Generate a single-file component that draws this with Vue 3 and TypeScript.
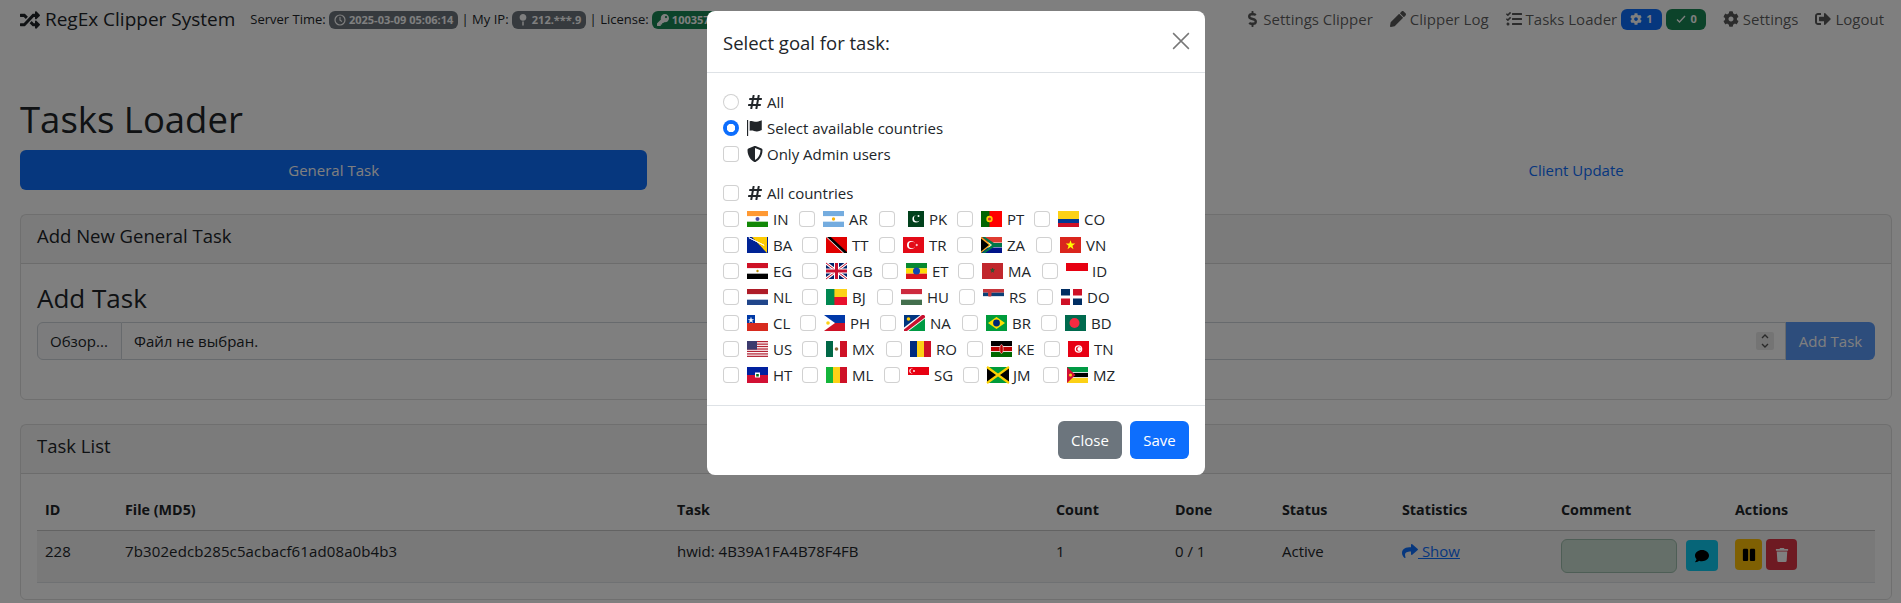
<template>
  <div class="page">
    <nav class="navbar">
      <div class="nav-left">
        <a class="brand">
          <svg class="icon" viewBox="0 0 512 512"><path :d="icons.shuffle" /></svg>
          RegEx Clipper System
        </a>
        <span class="server-info">
          Server Time:
          <span class="badge bg-dark">
            <svg class="icon" viewBox="0 0 24 24"><circle cx="12" cy="12" r="10" fill="none" stroke="currentColor" stroke-width="2.4" /><path d="M12 6v6.5l4 2.5" fill="none" stroke="currentColor" stroke-width="2.2" /></svg>
            2025-03-09 05:06:14</span>
          | My IP:
          <span class="badge bg-dark">
            <svg class="icon" viewBox="0 0 288 512"><path :d="icons.pin" /></svg>
            212.***.9</span>
          | License:
          <span class="badge bg-green">
            <svg class="icon" viewBox="0 0 512 512"><path :d="icons.key" /></svg>
            100357 Days</span>
        </span>
      </div>
      <div class="nav-right">
        <a class="nav-link"><svg class="icon dollar" viewBox="0 0 320 512"><path :d="icons.dollar" /></svg> Settings Clipper</a>
        <a class="nav-link"><svg class="icon" viewBox="0 0 512 512"><path :d="icons.pencil" /></svg> Clipper Log</a>
        <a class="nav-link">
          <svg class="icon" viewBox="0 0 512 512"><path :d="icons.tasks" /></svg> Tasks Loader
          <span class="count-badge bg-blue"><svg class="icon" viewBox="0 0 512 512"><path :d="icons.cog" /></svg> 1</span>
          <span class="count-badge bg-green"><svg class="icon" viewBox="0 0 24 24"><path d="M4 13l5 5L20 6" fill="none" stroke="currentColor" stroke-width="2.6" /></svg> 0</span>
        </a>
        <a class="nav-link"><svg class="icon" viewBox="0 0 512 512"><path :d="icons.cog" /></svg> Settings</a>
        <a class="nav-link"><svg class="icon" viewBox="0 0 512 512"><path :d="icons.logout" /></svg> Logout</a>
      </div>
    </nav>

    <main class="container">
      <h1>Tasks Loader</h1>
      <div class="tabs">
        <a class="tab active">General Task</a>
        <a class="tab">Other Task</a>
        <a class="tab">Client Update</a>
      </div>

      <section class="card add-card">
        <header class="card-header">Add New General Task</header>
        <div class="card-body">
          <h3>Add Task</h3>
          <div class="input-group">
            <span class="file-btn">Обзор...</span>
            <span class="file-name">Файл не выбран.</span>
            <span class="spin">
              <svg viewBox="0 0 10 18"><path d="M2 6l3-3 3 3M2 12l3 3 3-3" fill="none" stroke="currentColor" stroke-width="1.4" /></svg>
            </span>
            <button class="add-btn">Add Task</button>
          </div>
        </div>
      </section>

      <section class="card list-card">
        <header class="card-header">Task List</header>
        <div class="card-body">
          <table class="task-table">
            <colgroup>
              <col v-for="w in colWidths" :key="w" :style="{ width: w + 'px' }" />
            </colgroup>
            <thead>
              <tr>
                <th>ID</th><th>File (MD5)</th><th>Task</th><th>Count</th><th>Done</th>
                <th>Status</th><th>Statistics</th><th>Comment</th><th>Actions</th>
              </tr>
            </thead>
            <tbody>
              <tr>
                <td>228</td>
                <td class="md5">7b302edcb285c5acbacf61ad08a0b4b3</td>
                <td>hwid: 4B39A1FA4B78F4FB</td>
                <td>1</td>
                <td>0 / 1</td>
                <td>Active</td>
                <td><a class="show-link"><svg class="icon" viewBox="0 0 512 512"><path :d="icons.share" /></svg> Show</a></td>
                <td>
                  <div class="comment-cell">
                    <span class="comment-input"></span>
                    <button class="comment-btn"><svg class="icon" viewBox="0 0 512 512"><path :d="icons.comment" /></svg></button>
                  </div>
                </td>
                <td>
                  <div class="action-cell">
                    <button class="pause-btn"><svg class="icon" viewBox="0 0 448 512"><path :d="icons.pause" /></svg></button>
                    <button class="trash-btn"><svg class="icon" viewBox="0 0 448 512"><path :d="icons.trash" /></svg></button>
                  </div>
                </td>
              </tr>
            </tbody>
          </table>
        </div>
      </section>
    </main>

    <div class="backdrop"></div>

    <div class="modal">
      <header class="modal-header">
        <h5>Select goal for task:</h5>
        <svg class="close-x" viewBox="0 0 16 16"><path d="M1 1l14 14M15 1L1 15" fill="none" stroke="currentColor" stroke-width="1.3" /></svg>
      </header>
      <div class="modal-body">
        <label class="check-row">
          <input type="radio" name="goal" />
          <svg class="icon hash" viewBox="0 0 448 512"><path :d="icons.hash" /></svg> All
        </label>
        <label class="check-row">
          <input type="radio" name="goal" checked />
          <svg class="icon" viewBox="0 0 18 18"><path d="M0 0h1.3v18H0zM3 1.5c3-1.5 5 .8 8 .4 2.4-.3 4-1 5.6-1.6v11c-2 1.200-4 1.600-5.800 1.500-3-.2-4.800-1.700-7.800-.6z" /></svg>
          Select available countries
        </label>
        <label class="check-row">
          <input type="checkbox" />
          <svg class="icon" viewBox="0 0 512 512"><path :d="icons.shield" /></svg>
          Only Admin users
        </label>
        <label class="check-row all-countries">
          <input type="checkbox" />
          <svg class="icon hash" viewBox="0 0 448 512"><path :d="icons.hash" /></svg> All countries
        </label>
        <div v-for="(row, i) in countryRows" :key="i" class="country-row">
          <label v-for="c in row" :key="c.code" class="country" :style="{ width: c.pitch + 'px' }">
            <input type="checkbox" />
            <svg class="flag" viewBox="0 0 21 16" v-html="flags[c.code]"></svg>
            <span>{{ c.code }}</span>
          </label>
        </div>
      </div>
      <footer class="modal-footer">
        <button class="btn-close-modal">Close</button>
        <button class="btn-save">Save</button>
      </footer>
    </div>
  </div>
</template>

<script setup lang="ts">
interface Country {
  code: string
  pitch: number
}

const colWidths = [80, 552, 379, 119, 107, 120, 159, 174, 148]

const icons = {
  shuffle:
    'M504.971 359.029c9.373 9.373 9.373 24.569 0 33.941l-80 79.984c-15.01 15.01-40.971 4.49-40.971-16.971V416h-58.785a12.004 12.004 0 0 1-8.773-3.812l-70.556-75.596 53.333-57.143L352 336h32v-39.981c0-21.438 25.943-31.998 40.971-16.971l80 79.981zM12 176h84l52.781 56.551 53.333-57.143-70.556-75.596A11.999 11.999 0 0 0 122.785 96H12c-6.627 0-12 5.373-12 12v56c0 6.627 5.373 12 12 12zm372 0v39.984c0 21.46 25.961 31.98 40.971 16.971l80-79.984c9.373-9.373 9.373-24.569 0-33.941l-80-79.981C409.943 24.021 384 34.582 384 56.019V96h-58.785a12.004 12.004 0 0 0-8.773 3.812L96 336H12c-6.627 0-12 5.373-12 12v56c0 6.627 5.373 12 12 12h110.785c3.326 0 6.503-1.381 8.773-3.812L352 176h32z',
  pin: 'M112 316.94v156.69l22.02 33.02c4.75 7.12 15.22 7.12 19.97 0L176 473.63V316.94c-10.39 1.92-21.06 3.06-32 3.06s-21.61-1.14-32-3.06zM144 0C64.47 0 0 64.47 0 144s64.47 144 144 144 144-64.47 144-144S223.53 0 144 0z',
  key: 'M512 176.001C512 273.203 433.202 352 336 352c-11.22 0-22.19-1.062-32.827-3.069l-24.012 27.014A23.999 23.999 0 0 1 261.223 384H224v40c0 13.255-10.745 24-24 24h-40v40c0 13.255-10.745 24-24 24H24c-13.255 0-24-10.745-24-24v-78.059c0-6.365 2.529-12.47 7.029-16.971l161.802-161.802C163.108 213.814 160 195.271 160 176 160 78.798 238.797.001 335.999 0 433.488-.001 512 78.511 512 176.001zM336 128c0 26.51 21.49 48 48 48s48-21.49 48-48-21.49-48-48-48-48 21.49-48 48z',
  dollar:
    'M209.2 233.4l-108-31.6C88.7 198.2 80 186.5 80 173.5c0-16.3 13.2-29.5 29.5-29.5h66.3c12.2 0 24.2 3.7 34.2 10.5 6.1 4.1 14.3 3.1 19.5-2l34.8-34c7.1-6.9 6.1-18.4-1.8-24.5C238 74.8 207.4 64.1 176 64V16c0-8.8-7.2-16-16-16h-32c-8.8 0-16 7.2-16 16v48h-2.5C45.8 64-5.4 118.7.5 183.6c4.2 46.1 39.4 83.6 83.8 96.6l102.5 30c12.5 3.7 21.2 15.3 21.2 28.3 0 16.3-13.2 29.5-29.5 29.5h-66.3C100 368 88 364.3 78 357.5c-6.1-4.1-14.3-3.1-19.5 2l-34.8 34c-7.1 6.9-6.1 18.4 1.8 24.5 24.5 19.2 55.1 29.9 86.5 30v48c0 8.8 7.2 16 16 16h32c8.8 0 16-7.2 16-16v-48.2c46.6-.9 90.3-28.6 105.7-72.7 21.5-61.6-14.6-124.8-72.5-141.7z',
  pencil:
    'M497.9 142.1l-46.1 46.1c-4.7 4.7-12.3 4.7-17 0l-111-111c-4.7-4.7-4.7-12.3 0-17l46.1-46.1c18.7-18.7 49.1-18.7 67.9 0l60.1 60.1c18.8 18.7 18.8 49.1 0 67.9zM284.2 99.8L21.6 362.4.4 483.9c-2.9 16.4 11.4 30.6 27.8 27.8l121.5-21.3 262.6-262.6c4.7-4.7 4.7-12.3 0-17l-111-111c-4.8-4.7-12.4-4.7-17.1 0z',
  tasks:
    'M139.61 35.5a12 12 0 0 0-17 0L58.93 98.81l-22.7-22.12a12 12 0 0 0-17 0L3.53 92.41a12 12 0 0 0 0 17l47.59 47.4a12.78 12.78 0 0 0 17.61 0l15.59-15.62L156.52 69a12.09 12.09 0 0 0 .09-17zm0 159.19a12 12 0 0 0-17 0l-63.68 63.72-22.7-22.1a12 12 0 0 0-17 0L3.53 252a12 12 0 0 0 0 17L51 316.5a12.77 12.77 0 0 0 17.6 0l15.7-15.69 72.2-72.22a12 12 0 0 0 .09-16.9zM64 368c-26.49 0-48.59 21.5-48.59 48S37.53 464 64 464a48 48 0 0 0 0-96zm432 16H208a16 16 0 0 0-16 16v32a16 16 0 0 0 16 16h288a16 16 0 0 0 16-16v-32a16 16 0 0 0-16-16zm0-320H208a16 16 0 0 0-16 16v32a16 16 0 0 0 16 16h288a16 16 0 0 0 16-16V80a16 16 0 0 0-16-16zm0 160H208a16 16 0 0 0-16 16v32a16 16 0 0 0 16 16h288a16 16 0 0 0 16-16v-32a16 16 0 0 0-16-16z',
  cog: 'M487.4 315.7l-42.6-24.6c4.3-23.2 4.3-47 0-70.2l42.6-24.6c4.9-2.8 7.1-8.6 5.5-14-11.1-35.6-30-67.8-54.7-94.6-3.8-4.1-10-5.1-14.8-2.3L380.8 110c-17.9-15.4-38.5-27.3-60.8-35.1V25.8c0-5.6-3.9-10.5-9.4-11.7-36.7-8.2-74.3-7.8-109.2 0-5.5 1.2-9.4 6.1-9.4 11.7V75c-22.2 7.9-42.8 19.8-60.8 35.1L88.7 85.5c-4.9-2.8-11-1.9-14.8 2.3-24.7 26.7-43.6 58.9-54.7 94.6-1.7 5.4.6 11.2 5.5 14L67.3 221c-4.3 23.2-4.3 47 0 70.2l-42.6 24.6c-4.9 2.8-7.1 8.6-5.5 14 11.1 35.6 30 67.8 54.7 94.6 3.8 4.1 10 5.1 14.8 2.3l42.6-24.6c17.9 15.4 38.5 27.3 60.8 35.1v49.2c0 5.6 3.9 10.5 9.4 11.7 36.7 8.2 74.3 7.8 109.2 0 5.5-1.2 9.4-6.1 9.4-11.7v-49.2c22.2-7.9 42.8-19.8 60.8-35.1l42.6 24.6c4.9 2.8 11 1.9 14.8-2.3 24.7-26.7 43.6-58.9 54.7-94.6 1.5-5.5-.7-11.3-5.6-14.1zM256 336c-44.1 0-80-35.9-80-80s35.9-80 80-80 80 35.9 80 80-35.9 80-80 80z',
  logout:
    'M497 273L329 441c-15 15-41 4.5-41-17v-96H152c-13.3 0-24-10.7-24-24v-96c0-13.3 10.7-24 24-24h136V88c0-21.4 25.9-32 41-17l168 168c9.3 9.4 9.3 24.6 0 34zM192 436v-40c0-6.6-5.4-12-12-12H96c-17.7 0-32-14.3-32-32V160c0-17.7 14.3-32 32-32h84c6.6 0 12-5.4 12-12V76c0-6.6-5.4-12-12-12H96c-53 0-96 43-96 96v192c0 53 43 96 96 96h84c6.6 0 12-5.4 12-12z',
  share:
    'M503.691 189.836L327.687 37.851C312.281 24.546 288 35.347 288 56.015v80.053C127.371 137.907 0 170.1 0 322.326c0 61.441 39.581 122.309 83.333 154.132 13.653 9.931 33.111-2.533 28.077-18.631C66.066 312.814 132.917 274.316 288 272.085V360c0 20.7 24.3 31.453 39.687 18.164l176.004-152c11.071-9.562 11.086-26.753 0-36.328z',
  comment:
    'M256 32C114.6 32 0 125.1 0 240c0 49.6 21.4 95 57 130.7C44.5 421.1 2.7 466 2.2 466.5c-2.2 2.3-2.8 5.7-1.5 8.7S4.8 480 8 480c66.3 0 116-31.8 140.6-51.4 32.7 12.3 69 19.4 107.4 19.4 141.4 0 256-93.1 256-208S397.4 32 256 32z',
  pause:
    'M144 479H48c-26.5 0-48-21.5-48-48V79c0-26.5 21.5-48 48-48h96c26.5 0 48 21.5 48 48v352c0 26.5-21.5 48-48 48zm304-48V79c0-26.5-21.5-48-48-48h-96c-26.5 0-48 21.5-48 48v352c0 26.5 21.5 48 48 48h96c26.5 0 48-21.5 48-48z',
  trash:
    'M432 32H312l-9.4-18.7A24 24 0 0 0 281.1 0H166.8a23.72 23.72 0 0 0-21.4 13.3L136 32H16A16 16 0 0 0 0 48v32a16 16 0 0 0 16 16h416a16 16 0 0 0 16-16V48a16 16 0 0 0-16-16zM53.2 467a48 48 0 0 0 47.9 45h245.8a48 48 0 0 0 47.9-45L416 128H32z',
  hash: 'M440.667 182.109l7.143-40c1.313-7.355-4.342-14.109-11.813-14.109h-74.81l14.623-81.891C377.123 38.754 371.468 32 363.997 32h-40.632a12 12 0 0 0-11.813 9.891L296.175 128H197.54l14.623-81.891C213.477 38.754 207.822 32 200.35 32h-40.632a12 12 0 0 0-11.813 9.891L132.528 128H53.432a12 12 0 0 0-11.813 9.891l-7.143 40C33.163 185.246 38.818 192 46.289 192h74.81L98.242 320H19.146a12 12 0 0 0-11.813 9.891l-7.143 40C-1.123 377.246 4.532 384 12.003 384h74.81L72.19 465.891C70.877 473.246 76.532 480 84.003 480h40.632a12 12 0 0 0 11.813-9.891L151.826 384h98.634l-14.623 81.891C234.523 473.246 240.178 480 247.65 480h40.632a12 12 0 0 0 11.813-9.891L315.472 384h79.096a12 12 0 0 0 11.813-9.891l7.143-40c1.313-7.355-4.342-14.109-11.813-14.109h-74.81l22.857-128h79.096a12 12 0 0 0 11.813-9.891zM261.889 320h-98.634l22.857-128h98.634l-22.857 128z',
  shield:
    'M466.5 83.7l-192-80a48.15 48.15 0 0 0-36.9 0l-192 80C27.7 91.1 16 108.6 16 128c0 198.5 114.5 335.7 221.5 380.3 11.8 4.9 25.1 4.9 36.9 0C360.1 472.6 496 349.3 496 128c0-19.4-11.7-36.9-29.5-44.3zM256.1 446.3l-.1-381 175.9 73.3c-3.3 151.4-82.1 261.1-175.8 307.7z',
}

// gaps between the checkboxes differ per row, the last value is the leftover
const rowData: [string, number][][] = [
  [['IN', 76], ['AR', 80], ['PK', 78], ['PT', 77], ['CO', 70]],
  [['BA', 79], ['TT', 77], ['TR', 78], ['ZA', 79], ['VN', 70]],
  [['EG', 79], ['GB', 80], ['ET', 76], ['MA', 84], ['ID', 70]],
  [['NL', 79], ['BJ', 75], ['HU', 82], ['RS', 78], ['DO', 70]],
  [['CL', 77], ['PH', 80], ['NA', 82], ['BR', 79], ['BD', 70]],
  [['US', 79], ['MX', 84], ['RO', 81], ['KE', 77], ['TN', 70]],
  [['HT', 79], ['ML', 82], ['SG', 79], ['JM', 80], ['MZ', 70]],
]

const countryRows: Country[][] = rowData.map((r) => r.map(([code, pitch]) => ({ code, pitch })))

const rect = (y: number, h: number, fill: string) => `<rect y="${y}" width="21" height="${h}" fill="${fill}"/>`
const stripes = (...colors: string[]) =>
  colors.map((c, i) => rect((16 / colors.length) * i, 16 / colors.length, c)).join('')
const vstripes = (...colors: string[]) =>
  colors.map((c, i) => `<rect x="${(21 / colors.length) * i}" width="${21 / colors.length}" height="16" fill="${c}"/>`).join('')

const flags: Record<string, string> = {
  IN: stripes('#f93', '#fff', '#128807') + '<circle cx="10.5" cy="8" r="2" fill="#008" opacity=".7"/>',
  AR: stripes('#74acdf', '#fff', '#74acdf') + '<circle cx="10.5" cy="8" r="1.700" fill="#f6b40e"/>',
  PK: '<rect width="21" height="16" fill="#fff"/><rect x="5" width="16" height="16" fill="#01411c"/><circle cx="13" cy="8" r="3.600" fill="#fff"/><circle cx="14.200" cy="7.200" r="3.200" fill="#01411c"/><circle cx="15.500" cy="5" r="1" fill="#fff"/>',
  PT: '<rect width="21" height="16" fill="#f00"/><rect width="8.500" height="16" fill="#060"/><circle cx="8.500" cy="8" r="3.200" fill="#fc0"/><circle cx="8.500" cy="8" r="1.600" fill="#c33"/>',
  CO: rect(0, 8, '#fcd116') + rect(8, 4, '#003893') + rect(12, 4, '#ce1126'),
  BA: '<rect width="21" height="16" fill="#002395"/><path d="M5 0h15v16z" fill="#fecb00"/><path d="M2 0l1 2 1-1 1 2 1-1 1 2 1-1 1 2 1-1 1 2 1-1 1 2 1-1 1 2 1-1 1 2" fill="none" stroke="#fff" stroke-width=".9"/>',
  TT: '<rect width="21" height="16" fill="#e00000"/><path d="M0 0h4l17 16h-4z" fill="#fff"/><path d="M1 0h3.800L21 15v1h-3z" fill="#000"/>',
  TR: '<rect width="21" height="16" fill="#e30a17"/><circle cx="8" cy="8" r="4" fill="#fff"/><circle cx="9" cy="8" r="3.200" fill="#e30a17"/><path d="M12 8l3-1-1.800 2.600V6.400L15 9z" fill="#fff"/>',
  ZA: '<rect width="21" height="16" fill="#fff"/><rect width="21" height="5.500" fill="#e03c31"/><rect y="10.500" width="21" height="5.500" fill="#001489"/><path d="M0 0l10 8-10 8z" fill="#ffb81c"/><path d="M0 1.500L8 8l-8 6.500z" fill="#000"/><path d="M4 0l9 6h8v4h-8l-9 6H1l10-8L1 0z" fill="#007749"/>',
  VN: '<rect width="21" height="16" fill="#da251d"/><path d="M10.500 3.200l1.200 3.400h3.600l-2.900 2.100 1.100 3.500-3-2.200-3 2.200 1.100-3.500-2.900-2.100h3.600z" fill="#ff0"/>',
  EG: stripes('#ce1126', '#fff', '#000') + '<circle cx="10.500" cy="8" r="1.200" fill="#c09300"/>',
  GB: '<rect width="21" height="16" fill="#012169"/><path d="M0 0l21 16M21 0L0 16" stroke="#fff" stroke-width="3"/><path d="M0 0l21 16M21 0L0 16" stroke="#c8102e" stroke-width="1"/><path d="M10.500 0v16M0 8h21" stroke="#fff" stroke-width="5"/><path d="M10.500 0v16M0 8h21" stroke="#c8102e" stroke-width="3"/>',
  ET: stripes('#078930', '#fcdd09', '#da121a') + '<circle cx="10.500" cy="8" r="3.500" fill="#0f47af"/>',
  MA: '<rect width="21" height="16" fill="#c1272d"/><path d="M10.500 5l1 4.200-3-2.600h4l-3 2.600z" fill="none" stroke="#006233" stroke-width=".6"/>',
  ID: '<rect width="22" height="8" fill="#e70011"/>',
  NL: stripes('#ae1c28', '#fff', '#21468b'),
  BJ: '<rect width="21" height="8" fill="#fcd116"/><rect y="8" width="21" height="8" fill="#e8112d"/><rect width="8.400" height="16" fill="#008751"/>',
  HU: stripes('#cd2a3e', '#fff', '#436f4d'),
  RS: '<rect width="21" height="11" fill="#fff"/>' + rect(0, 3.700, '#c6363c') + rect(3.700, 3.700, '#0c4076') + rect(7.400, 3.700, '#fff') + '<rect x="5" y="2.500" width="3.500" height="5" rx="1" fill="#c6363c"/>',
  DO: '<rect width="21" height="16" fill="#fff"/><rect width="9" height="6.500" fill="#002d62"/><rect x="12" width="9" height="6.500" fill="#ce1126"/><rect y="9.500" width="9" height="6.500" fill="#ce1126"/><rect x="12" y="9.500" width="9" height="6.500" fill="#002d62"/>',
  CL: '<rect width="21" height="8" fill="#fff"/><rect y="8" width="21" height="8" fill="#d72b1f"/><rect width="8" height="8" fill="#0039a6"/><path d="M4 1.800l.8 2.400h2.400l-2 1.400.8 2.300-2-1.400-2 1.400.8-2.300-2-1.400h2.400z" fill="#fff"/>',
  PH: '<rect width="21" height="8" fill="#0038a8"/><rect y="8" width="21" height="8" fill="#ce1126"/><path d="M0 0l11 8-11 8z" fill="#fff"/><circle cx="4" cy="8" r="1.800" fill="#fcd116"/>',
  NA: '<rect width="21" height="16" fill="#009a44"/><path d="M0 0h21L0 16z" fill="#003580"/><path d="M21 0v3.500L4.500 16H0v-3.500L16.500 0z" fill="#fff"/><path d="M21 1v1.500L3 16H0v-1.500L18 0h2z" fill="#c8102e"/><circle cx="4.500" cy="4" r="1.800" fill="#ffcd00"/>',
  BR: '<rect width="21" height="16" fill="#009c3b"/><path d="M10.500 2L19 8l-8.500 6L2 8z" fill="#ffdf00"/><circle cx="10.500" cy="8" r="3.400" fill="#002776"/>',
  BD: '<rect width="21" height="16" fill="#006a4e"/><circle cx="9.500" cy="8" r="5" fill="#f42a41"/>',
  US: '<rect width="21" height="16" fill="#fff"/>' + [0, 2.5, 4.9, 7.4, 9.8, 12.3, 14.7].map((y) => rect(y, 1.25, '#b22234')).join('') + '<rect width="10" height="8.600" fill="#3c3b6e"/>',
  MX: vstripes('#006847', '#fff', '#ce1126') + '<circle cx="10.500" cy="8" r="1.800" fill="#8c6a3c"/>',
  RO: vstripes('#002b7f', '#fcd116', '#ce1126'),
  KE: stripes('#000', '#b00', '#060') + rect(5, .8, '#fff') + rect(10.200, .8, '#fff') + '<ellipse cx="10.500" cy="8" rx="1.800" ry="4.500" fill="#b00" stroke="#fff" stroke-width=".5"/>',
  TN: '<rect width="21" height="16" fill="#e70013"/><circle cx="10.500" cy="8" r="3.800" fill="#fff"/><circle cx="10.500" cy="8" r="2.500" fill="#e70013"/><circle cx="11.200" cy="8" r="1.900" fill="#fff"/>',
  HT: '<rect width="21" height="8" fill="#00209f"/><rect y="8" width="21" height="8" fill="#d21034"/><rect x="8" y="5.500" width="5" height="5" fill="#fff"/><rect x="9.200" y="7" width="2.600" height="2.500" fill="#016a16"/>',
  ML: vstripes('#14b53a', '#fcd116', '#ce1126'),
  SG: '<rect width="21" height="8" fill="#e70011"/><circle cx="3.600" cy="4" r="2.400" fill="#fff"/><circle cx="4.500" cy="4" r="2.200" fill="#e70011"/><circle cx="6" cy="4" r=".9" fill="#fff"/>',
  JM: '<rect width="21" height="16" fill="#009b3a"/><path d="M0 0l10 8L0 16zM22 0L12 8l10 8z" fill="#000"/><path d="M0 0l22 16M22 0L0 16" stroke="#fed100" stroke-width="2.200"/>',
  MZ: stripes('#009a44', '#000', '#fcd116') + rect(5, .8, '#fff') + rect(10.200, .8, '#fff') + '<path d="M0 0l8.500 8L0 16z" fill="#d21034"/><circle cx="3.500" cy="8" r="1.500" fill="#fcd116"/>',
}
</script>

<style>
html,
body {
  margin: 0;
  background: #fff;
}
</style>

<style scoped>
.page {
  position: relative;
  height: 603px;
  overflow: hidden;
  font-family: "Open Sans", "Noto Sans", sans-serif;
  font-size: 15px;
  line-height: 24px;
  color: #212529;
  background: #fff;
}

.icon {
  display: inline-block;
  width: 16px;
  height: 16px;
  fill: currentColor;
  vertical-align: -0.15em;
}

/* navbar */
.navbar {
  display: flex;
  justify-content: space-between;
  align-items: center;
  height: 38px;
  padding: 0 17px 0 20px;
}

.nav-left,
.nav-right {
  display: flex;
  align-items: center;
  white-space: nowrap;
}

.brand {
  font-size: 19px;
  margin-right: 15px;
}

.brand .icon {
  width: 20px;
  height: 20px;
  vertical-align: -0.2em;
}

.server-info {
  font-size: 13px;
}

.badge {
  display: inline-block;
  padding: 0 5px;
  height: 18px;
  line-height: 18px;
  font-size: 11px;
  font-weight: 700;
  color: #fff;
  border-radius: 6px;
}

.badge .icon {
  width: 12px;
  height: 12px;
}

.bg-dark {
  background: #6c757d;
}

.bg-green {
  background: #198754;
}

.bg-blue {
  background: #0d6efd;
}

.nav-link {
  color: rgba(0, 0, 0, 0.65);
  margin-left: 17px;
  display: flex;
  align-items: center;
  gap: 4px;
}

.dollar {
  width: 12px;
}

.count-badge {
  display: inline-flex;
  align-items: center;
  justify-content: center;
  gap: 4px;
  height: 21px;
  padding: 0 9px;
  font-size: 11px;
  font-weight: 700;
  color: #fff;
  border-radius: 6px;
}

.count-badge .icon {
  width: 12px;
  height: 12px;
}

/* page content */
.container {
  padding: 0 9px 0 20px;
}

h1 {
  margin: 0;
  padding-top: 50px;
  font-size: 36.5px;
  line-height: 62px;
  height: 62px;
  font-weight: 400;
}

.tabs {
  display: flex;
  margin-bottom: 24px;
}

.tab {
  flex: 1 1 auto;
  height: 40px;
  line-height: 41px;
  text-align: center;
  color: #0d6efd;
  border-radius: 6px;
}

.tab.active {
  background: #0d6efd;
  color: #fff;
}

.card {
  border: 1px solid rgba(0, 0, 0, 0.125);
  border-radius: 6px;
  margin-bottom: 24px;
  box-sizing: border-box;
}

.card-header {
  height: 49px;
  line-height: 42px;
  padding: 0 16px;
  font-size: 18.5px;
  background: rgba(0, 0, 0, 0.03);
  border-bottom: 1px solid rgba(0, 0, 0, 0.125);
  box-sizing: border-box;
}

.card-body {
  padding: 16px;
}

.add-card {
  height: 186px;
}

h3 {
  margin: 0 0 6px;
  font-size: 26px;
  line-height: 36px;
  font-weight: 400;
}

.input-group {
  display: flex;
  align-items: stretch;
  height: 38px;
}

.file-btn {
  width: 85px;
  box-sizing: border-box;
  padding: 0 12px;
  line-height: 36px;
  border: 1px solid #ced4da;
  border-radius: 6px 0 0 6px;
  background: #f8f9fa;
}

.file-name {
  flex: 1;
  padding: 0 12px;
  line-height: 36px;
  border: 1px solid #ced4da;
  border-left: 0;
}

.spin {
  position: absolute;
  left: 1756px;
  top: 332px;
  width: 18px;
  height: 18px;
  background: #e9e9e9;
  color: #555;
  border-radius: 2px;
  display: flex;
  justify-content: center;
}

.spin svg {
  width: 10px;
  height: 18px;
}

.add-btn {
  width: 89px;
  padding: 0;
  border: 0;
  font: inherit;
  color: #fff;
  background: #5a9af8;
  border-radius: 0 6px 6px 0;
}

/* table */
.list-card .card-body {
  padding: 16px;
}

.task-table {
  border-collapse: collapse;
  table-layout: fixed;
  width: 1838px;
}

.task-table th,
.task-table td {
  padding: 8px;
  text-align: left;
  vertical-align: top;
}

.task-table th {
  height: 40px;
  box-sizing: border-box;
  font-weight: 700;
  font-size: 14.3px;
  border-bottom: 1px solid #c6c6c6;
}

.task-table td {
  height: 52px;
  box-sizing: border-box;
  background: rgba(0, 0, 0, 0.05);
  border-bottom: 1px solid #dee2e6;
}

.task-table .md5 {
  letter-spacing: 0.12px;
}

.show-link {
  color: #0d6efd;
  text-decoration: underline;
}

.comment-cell,
.action-cell {
  display: flex;
}

.comment-cell {
  gap: 9px;
}

.action-cell {
  gap: 4px;
}

.comment-input {
  display: block;
  width: 116px;
  height: 34px;
  box-sizing: border-box;
  background: #cbdfd2;
  border: 1px solid #9dbdac;
  border-radius: 6px;
}

.comment-btn,
.pause-btn,
.trash-btn {
  display: flex;
  align-items: center;
  justify-content: center;
  height: 31px;
  padding: 0;
  border: 0;
  border-radius: 4px;
}

.comment-btn .icon,
.pause-btn .icon,
.trash-btn .icon {
  width: 14px;
  height: 14px;
}

.comment-btn {
  width: 32px;
  margin-top: 1px;
  background: #0dcaf0;
  color: #000;
}

.pause-btn {
  width: 27px;
  background: #ffc107;
  color: #000;
}

.trash-btn {
  width: 31px;
  background: #dc3545;
  color: #fff;
}

/* modal */
.backdrop {
  position: absolute;
  inset: 0;
  background: rgba(0, 0, 0, 0.5);
}

.modal {
  position: absolute;
  left: 707px;
  top: 11px;
  width: 498px;
  height: 464px;
  display: flex;
  flex-direction: column;
  background: #fff;
  border-radius: 8px;
}

.modal-header {
  display: flex;
  justify-content: space-between;
  align-items: center;
  height: 62px;
  padding: 0 15px 0 16px;
  border-bottom: 1px solid #dee2e6;
  box-sizing: border-box;
}

h5 {
  margin: 0;
  padding-top: 2px;
  font-size: 18.5px;
  font-weight: 400;
}

.close-x {
  width: 18px;
  height: 18px;
  margin-top: -1px;
  color: #777;
}

.modal-body {
  flex: 1;
  padding: 16px;
}

.check-row,
.country {
  display: flex;
  align-items: center;
  height: 26px;
}

.check-row .icon {
  margin-right: 4px;
}

.all-countries {
  margin-top: 13px;
}

.country-row {
  display: flex;
  height: 26px;
}

.country {
  flex: none;
}

.country span {
  margin-left: 5px;
}

.flag {
  display: block;
  width: 21px;
  height: 16px;
  margin-left: 8px;
  flex: none;
  overflow: visible;
}

input {
  appearance: none;
  width: 16px;
  height: 16px;
  margin: 0 8px 0 0;
  flex: none;
  border: 1px solid rgba(0, 0, 0, 0.18);
  background: #fff;
  border-radius: 4px;
  box-sizing: border-box;
}

.country input {
  margin-right: 0;
}

input[type="radio"] {
  border-radius: 50%;
}

input[type="radio"]:checked {
  border: 0;
  background: radial-gradient(circle, #fff 0, #fff 4px, #0d6efd 4.5px);
}

.modal-footer {
  display: flex;
  justify-content: flex-end;
  align-items: center;
  gap: 8px;
  height: 70px;
  padding: 0 16px 1px;
  border-top: 1px solid #dee2e6;
  box-sizing: border-box;
}

.modal-footer button {
  height: 38px;
  padding: 0 12px;
  border: 0;
  border-radius: 6px;
  font: inherit;
  color: #fff;
}

.btn-close-modal {
  width: 64px;
  background: #6c757d;
}

.btn-save {
  width: 59px;
  background: #0d6efd;
}
</style>
